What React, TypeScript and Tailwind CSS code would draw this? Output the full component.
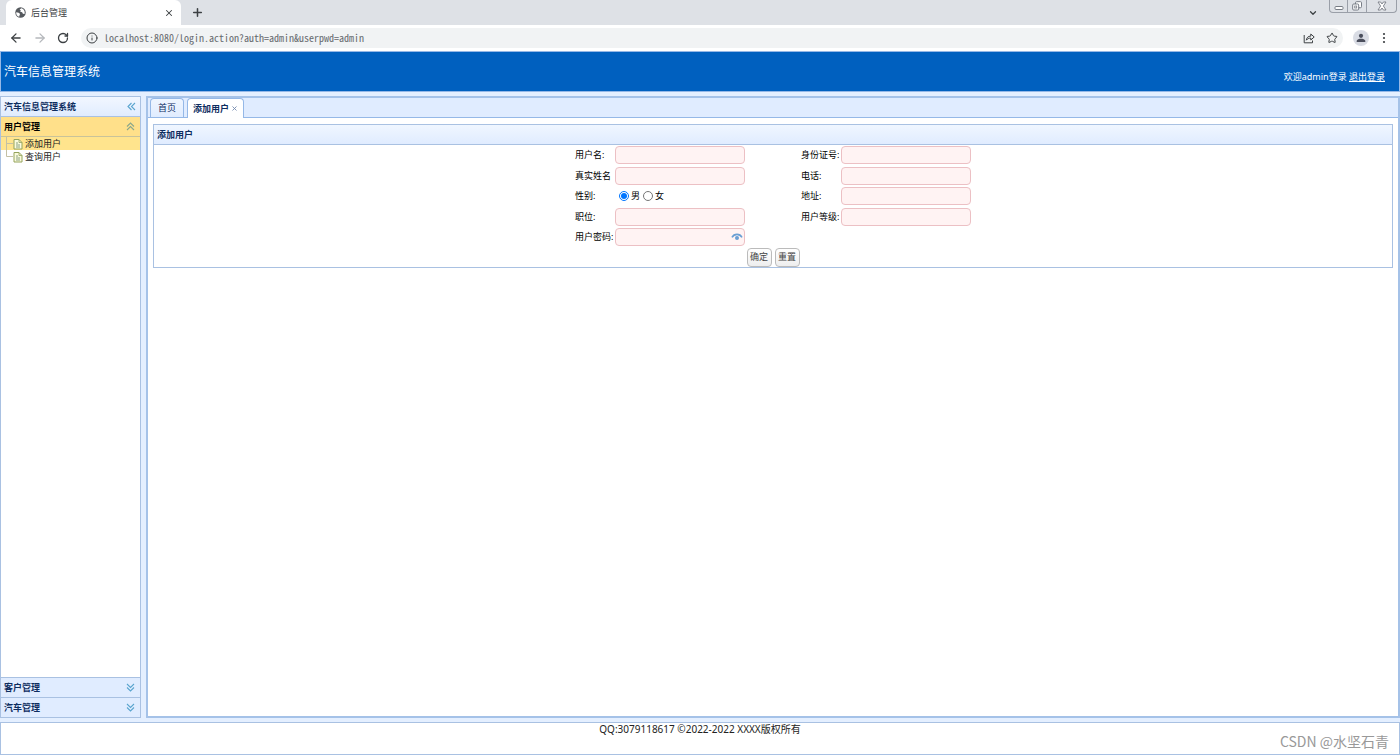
import React, { useState } from 'react';
import { ArrowLeft, ArrowRight, ChevronDown, Info, Plus, RotateCw, Star, X } from 'lucide-react';

const UI_FONT = 'font-["Noto_Sans","Noto_Sans_CJK_SC",sans-serif]';

interface FieldProps {
  id: string;
  label: string;
  type?: string;
  side?: 'left' | 'right';
}

const Field: React.FC<FieldProps> = ({ id, label, type = 'text', side = 'left' }) => (
  <>
    <label htmlFor={id} className={side === 'right' ? 'col-start-4 whitespace-nowrap' : 'col-start-1 whitespace-nowrap'}>
      {label}
    </label>
    <div className="relative flex items-center">
      <input
        id={id}
        type={type}
        className="h-[18px] w-full rounded border border-[#ecc0c4] bg-[#fff3f3] px-1 outline-none"
      />
      {type === 'password' && (
        <button type="button" aria-label="显示密码" className="absolute right-[2px]">
          <svg viewBox="0 0 12 10" className="h-[10px] w-3">
            <path d="M1 5.4C3.2 1.4 8.8 1.4 11 5.4" fill="none" stroke="#6a9fd4" strokeWidth="1.6" />
            <circle cx="6" cy="6" r="2" fill="#6a9fd4" />
          </svg>
        </button>
      )}
    </div>
  </>
);

const DoubleChevron: React.FC<{ direction: 'left' | 'up' | 'down' }> = ({ direction }) => {
  const paths = {
    left: 'M4.5 1L1 4.5L4.5 8M8 1L4.5 4.5L8 8',
    up: 'M1 4.5L4.5 1L8 4.5M1 8L4.5 4.5L8 8',
    down: 'M1 1L4.5 4.5L8 1M1 4.5L4.5 8L8 4.5',
  };
  return (
    <svg viewBox="0 0 9 9" className="h-[9px] w-[9px]">
      <path d={paths[direction]} fill="none" stroke={direction === 'up' ? '#8aa78c' : '#5aa5cf'} strokeWidth="1.1" />
    </svg>
  );
};

const TreeItem: React.FC<{ label: string; selected?: boolean; last?: boolean }> = ({ label, selected, last }) => (
  <li className={selected ? 'bg-[#ffe48d]' : ''}>
    <a href="#" className="flex h-[13px] items-center pl-[4px] text-[9px] leading-[13px] text-[#222]">
      <svg viewBox="0 0 8 13" className="h-[13px] w-2">
        <path d={last ? 'M1.5 0V6.5H8' : 'M1.5 0V13M1.5 6.5H8'} fill="none" stroke="#c4c0a4" />
      </svg>
      <svg viewBox="0 0 10 12" className="mr-[2px] h-3 w-[10px]">
        <path d="M1 1.5H6L9 4.5V11H1Z" fill="#fbfbdc" stroke="#94a35c" />
        <path d="M6 1.5V4.5H9" fill="none" stroke="#94a35c" strokeWidth="0.8" />
        <path d="M3 5H5M3 7H7M3 9H7" stroke="#7d9678" strokeWidth="0.9" />
      </svg>
      {label}
    </a>
  </li>
);

const BrowserBar = () => (
  <div className="text-[#3c4043]">
    <div className="flex h-[25px] items-start bg-[#dee1e6] pl-[6px]">
      <div className="flex h-full w-[175px] items-center rounded-t-md bg-white pr-[7px] pl-[9px]">
        <svg viewBox="0 0 12 12" className="mr-[5px] h-[11px] w-[11px]">
          <circle cx="6" cy="6" r="5.7" fill="#55595e" />
          <path d="M1.3 5.6L4 6.2L5.6 7.6L5 8.8L4.6 10.7C2.4 10 1 8 1.3 5.6ZM6.8 1.4L5 3L6.4 3.8L5.6 5.2L7.8 5.6L8.6 7.4L10.4 7.6C11.3 4.6 9.4 1.9 6.8 1.4Z" fill="#fff" />
        </svg>
        <span className="flex-1 text-[9px] leading-3">后台管理</span>
        <button aria-label="关闭标签页"><X size={10} strokeWidth={2.5} /></button>
      </div>
      <button aria-label="新标签页" className="flex h-full w-8 items-center justify-center">
        <Plus size={13} strokeWidth={2.8} />
      </button>
      <div className="flex-1" />
      <button aria-label="搜索标签页" className="mr-[11px] flex h-full items-center">
        <ChevronDown size={10} strokeWidth={3} />
      </button>
      <div className="mr-[3px] flex h-[13px] w-[68px] rounded-b border border-t-0 border-[#9a9fa8] text-[#777c85]">
        <button aria-label="最小化" className="flex w-[18px] items-center justify-center border-r border-[#9a9fa8]">
          <svg viewBox="0 0 10 10" className="h-[10px] w-[10px]">
            <rect x="1" y="5.5" width="8" height="3" rx="1" fill="#fff" stroke="currentColor" />
          </svg>
        </button>
        <button aria-label="还原" className="flex w-[19px] items-center justify-center border-r border-[#9a9fa8]">
          <svg viewBox="0 0 10 10" className="h-[10px] w-[10px]">
            <rect x="3.5" y="0.7" width="6" height="6" rx="1" fill="#fff" stroke="currentColor" />
            <rect x="0.7" y="3" width="6" height="6" rx="1" fill="#fff" stroke="currentColor" />
            <rect x="2.7" y="5" width="2" height="2" fill="none" stroke="currentColor" strokeWidth="0.8" />
          </svg>
        </button>
        <button aria-label="关闭" className="flex flex-1 items-center justify-center">
          <svg viewBox="0 0 10 10" className="h-[10px] w-[10px]">
            <path d="M1 1H3.6L5 3L6.4 1H9L6.4 5L9 9H6.4L5 7L3.6 9H1L3.6 5Z" fill="#fff" stroke="currentColor" strokeWidth="0.9" />
          </svg>
        </button>
      </div>
    </div>

    <div className="flex h-[26px] items-center bg-white pr-[14px] pl-[9px]">
      <button aria-label="后退" className="mr-[10px]"><ArrowLeft size={14} strokeWidth={2.2} /></button>
      <button aria-label="前进" className="mr-[10px] text-[#b5b8bc]"><ArrowRight size={14} strokeWidth={2.2} /></button>
      <button aria-label="重新加载" className="mr-3"><RotateCw size={12} strokeWidth={2.6} /></button>
      <div className="flex h-5 flex-1 items-center rounded-full bg-[#f1f3f4] px-[5px]">
        <Info size={12} strokeWidth={2} className="mr-[6px]" />
        <input
          aria-label="地址栏"
          defaultValue="localhost:8080/login.action?auth=admin&userpwd=admin"
          className='flex-1 bg-transparent font-["Noto_Sans_Mono_CJK_SC","Liberation_Mono",monospace] text-[10px] leading-4 text-[#666a6e] outline-none'
        />
        <button aria-label="分享" className="mr-[11px]">
          <svg viewBox="0 0 12 12" className="h-3 w-3" fill="none" stroke="currentColor" strokeWidth="1">
            <path d="M1.2 3V10.8H9.5V8.5" />
            <path d="M3.3 8.2C3.6 5.5 5.2 4.2 7.8 4.1V2L11.2 5L7.8 8V6.1C5.8 6.1 4.4 6.8 3.3 8.2Z" />
          </svg>
        </button>
        <button aria-label="收藏"><Star size={12} strokeWidth={2} /></button>
      </div>
      <button aria-label="用户" className="mr-[13px] ml-[10px] flex h-4 w-4 items-center justify-center rounded-full bg-[#d9dce4]">
        <svg viewBox="0 0 10 10" className="h-[10px] w-[10px]" fill="#4a4e5c">
          <circle cx="5" cy="2.8" r="2.1" />
          <path d="M0.7 9V7.8C0.7 6.3 3.4 5.7 5 5.7S9.3 6.3 9.3 7.8V9Z" />
        </svg>
      </button>
      <button aria-label="菜单">
        <svg viewBox="0 0 4 12" className="h-3 w-1" fill="currentColor">
          <circle cx="2" cy="2" r="1.1" />
          <circle cx="2" cy="6" r="1.1" />
          <circle cx="2" cy="10" r="1.1" />
        </svg>
      </button>
    </div>
  </div>
);

const Sidebar = () => (
  <aside className="mr-[5px] flex w-[141px] flex-col border border-[#a9c1e2] bg-white text-[9px] font-bold text-[#0e2d5f]">
    <div className="flex h-5 items-center justify-between border-b border-[#a9c1e2] bg-gradient-to-b from-[#f2f7ff] to-[#e0ecff] pr-[4px] pl-[3px]">
      <h2>汽车信息管理系统</h2>
      <button aria-label="收起侧栏"><DoubleChevron direction="left" /></button>
    </div>
    <button className="flex h-5 items-center justify-between border-b border-[#c9c39a] bg-[#ffe08a] pr-[5px] pl-[3px] text-black">
      用户管理
      <DoubleChevron direction="up" />
    </button>
    <ul className="flex-1 font-normal">
      <TreeItem label="添加用户" selected />
      <TreeItem label="查询用户" last />
    </ul>
    <button className="flex h-5 items-center justify-between border-t border-[#a9c1e2] bg-[#e0ecff] pr-[5px] pl-[3px]">
      客户管理
      <DoubleChevron direction="down" />
    </button>
    <button className="flex h-5 items-center justify-between border-t border-[#a9c1e2] bg-[#e0ecff] pr-[5px] pl-[3px]">
      汽车管理
      <DoubleChevron direction="down" />
    </button>
  </aside>
);

const UserForm = () => {
  const [sex, setSex] = useState('男');

  return (
    <form
      onSubmit={(e) => e.preventDefault()}
      className="grid grid-cols-[40px_130px_56px_40px_130px] grid-rows-[20px_21px_20px_21px_20px_20px] items-center justify-center text-[9px] leading-3 text-black"
    >
      <Field id="username" label="用户名:" />
      <Field id="idcard" label="身份证号:" side="right" />
      <Field id="realname" label="真实姓名" />
      <Field id="phone" label="电话:" side="right" />
      <span className="col-start-1">性别:</span>
      <div className="flex items-center pl-[4px]">
        {['男', '女'].map((s) => (
          <label key={s} className="mr-[3px] flex items-center gap-[2px]">
            <input
              type="radio"
              name="sex"
              checked={sex === s}
              onChange={() => setSex(s)}
              className="h-[10px] w-[10px] accent-[#0075ff]"
            />
            {s}
          </label>
        ))}
      </div>
      <Field id="address" label="地址:" side="right" />
      <Field id="position" label="职位:" />
      <Field id="level" label="用户等级:" side="right" />
      <Field id="password" label="用户密码:" type="password" />
      <div className="col-span-5 col-start-1 flex justify-center gap-[3px]">
        <button type="submit" className="h-[19px] w-[25px] rounded border border-[#bbb] bg-gradient-to-b from-white to-[#eee] text-[#444]">
          确定
        </button>
        <button type="reset" className="h-[19px] w-[25px] rounded border border-[#bbb] bg-gradient-to-b from-white to-[#eee] text-[#444]">
          重置
        </button>
      </div>
    </form>
  );
};

export default function App() {
  return (
    <div className={`${UI_FONT} flex h-screen flex-col overflow-hidden bg-[#e4efff]`}>
      <BrowserBar />

      <header className="flex h-[41px] items-center justify-between border border-[#95b8e7] bg-[#0060bf] pr-[14px] pl-[3px] text-white">
        <h1 className="text-[12px] leading-4">汽车信息管理系统</h1>
        <div className="pt-[10px] text-[9px] leading-3">
          欢迎admin登录 <a href="#" className="underline">退出登录</a>
        </div>
      </header>

      <div className="my-1 flex min-h-0 flex-1">
        <Sidebar />
        <main className="flex flex-1 flex-col border-2 border-[#a5c2e8] bg-white">
          <div role="tablist" className="flex h-5 items-end gap-[3px] border-b border-[#95b8e7] bg-[#e0ecff] pl-[2px] text-[9px] text-[#0e2d5f]">
            <button role="tab" aria-selected="false" className="h-[19px] w-[34px] rounded-t border border-b-0 border-[#95b8e7] bg-gradient-to-b from-[#eff5ff] to-[#e0ecff]">
              首页
            </button>
            <div className="-mb-px flex h-5 w-[57px] items-center justify-center gap-[2px] rounded-t border border-b-0 border-[#95b8e7] bg-white">
              <button role="tab" aria-selected="true" className="font-bold">添加用户</button>
              <button aria-label="关闭"><X size={7} strokeWidth={3} className="text-[#7188ad]" /></button>
            </div>
          </div>
          <section className="mx-[5px] mt-[6px] border border-[#a9c1e2]">
            <h2 className="flex h-5 items-center border-b border-[#a9c1e2] bg-gradient-to-b from-[#f0f6ff] to-[#e0ecff] pl-[3px] text-[9px] font-bold text-[#0e2d5f]">
              添加用户
            </h2>
            <UserForm />
          </section>
        </main>
      </div>

      <footer className="relative h-[33px] border border-[#a9c1e2] bg-white text-center text-[10px] leading-3 text-[#222]">
        QQ:3079118617 ©2022-2022 XXXX版权所有
        <span className='absolute right-[10px] bottom-[5px] font-["Noto_Sans_CJK_SC",sans-serif] text-[14px] leading-4 text-[#999]'>
          CSDN @水坚石青
        </span>
      </footer>
    </div>
  );
}
